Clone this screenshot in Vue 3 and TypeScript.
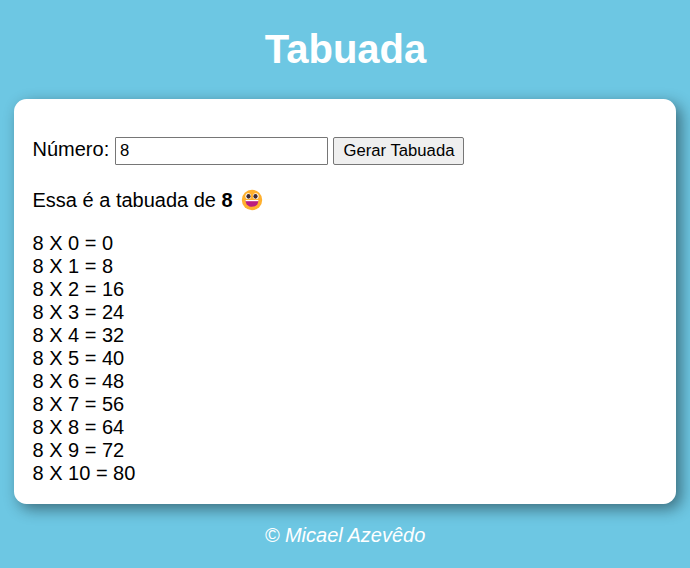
<script setup lang="ts">
import { ref } from 'vue'

const numero = ref<number>(8)
const gerado = ref<number>(8)
const linhas = Array.from({ length: 11 }, (_, i) => i)

function gerar(): void {
  gerado.value = Number(numero.value)
}
</script>

<template>
  <div class="pagina">
    <header><h1>Tabuada</h1></header>
    <section>
      <div class="form">
        <label for="num">Número:</label>
        <input id="num" v-model="numero" type="number" />
        <button type="button" @click="gerar">Gerar Tabuada</button>
      </div>
      <p class="titulo">
        <span>Essa é a tabuada de <strong>{{ gerado }}</strong></span>
        <svg class="emoji" viewBox="0 0 22 22" aria-hidden="true">
          <circle cx="11" cy="11" r="10.2" fill="#ffb02e" />
          <ellipse cx="7.2" cy="7.3" rx="2.8" ry="3" fill="#fff" />
          <ellipse cx="14.8" cy="7.3" rx="2.8" ry="3" fill="#fff" />
          <ellipse cx="7.5" cy="7.3" rx="2.1" ry="2.4" fill="#402a32" />
          <ellipse cx="14.5" cy="7.3" rx="2.1" ry="2.4" fill="#402a32" />
          <path d="M4.6 11.2H17.4C17.4 15.4 14.8 17.8 11 17.8S4.6 15.4 4.6 11.2Z" fill="#bb1d80" />
          <path d="M4.6 11H17.4V12.2H4.6Z" fill="#fff" />
        </svg>
      </p>
      <div class="lista">
        <div v-for="i in linhas" :key="i">{{ gerado }} X {{ i }} = {{ gerado * i }}</div>
      </div>
    </section>
    <footer>© Micael Azevêdo</footer>
  </div>
</template>

<style>
body {
  background: #6dc7e3;
}
</style>

<style scoped>
.pagina {
  min-height: 568px;
  box-sizing: border-box;
  padding: 26px 14px 0;
  overflow: hidden;
  font: 20px/23px "Liberation Sans", Arial, sans-serif;
  color: #000;
}
h1 {
  margin: 0;
  padding-left: 1px;
  font-size: 40px;
  line-height: 46px;
  color: #fff;
  text-align: center;
}
section {
  box-sizing: border-box;
  height: 405px;
  margin-top: 27px;
  padding: 38px 18.5px 0;
  background: #fff;
  border-radius: 12.5px;
  box-shadow: 5px 5px 15px rgba(0, 0, 0, 0.45);
}
.form {
  display: flex;
  align-items: center;
  height: 28px;
}
label {
  width: 82.5px;
  padding-bottom: 3px;
  box-sizing: border-box;
}
input {
  box-sizing: border-box;
  width: 213px;
  height: 28px;
  margin: 0 5px 0 0;
  padding: 1px 4px;
  border: 1px solid #767676;
  border-radius: 1px;
  font: 16.67px "Liberation Sans", Arial, sans-serif;
  appearance: textfield;
}
button {
  box-sizing: border-box;
  width: 131px;
  height: 28px;
  padding: 0 0 1px 1px;
  border: 1px solid #767676;
  border-radius: 2px;
  background: #efefef;
  color: #000;
  font: 16.67px "Liberation Sans", Arial, sans-serif;
  white-space: nowrap;
}
.titulo {
  display: flex;
  margin: 24px 0 20px;
}
.emoji {
  width: 22px;
  height: 22px;
  margin-left: 8.5px;
}
footer {
  margin-top: 20px;
  color: #fff;
  font-style: italic;
  text-align: center;
}
</style>
